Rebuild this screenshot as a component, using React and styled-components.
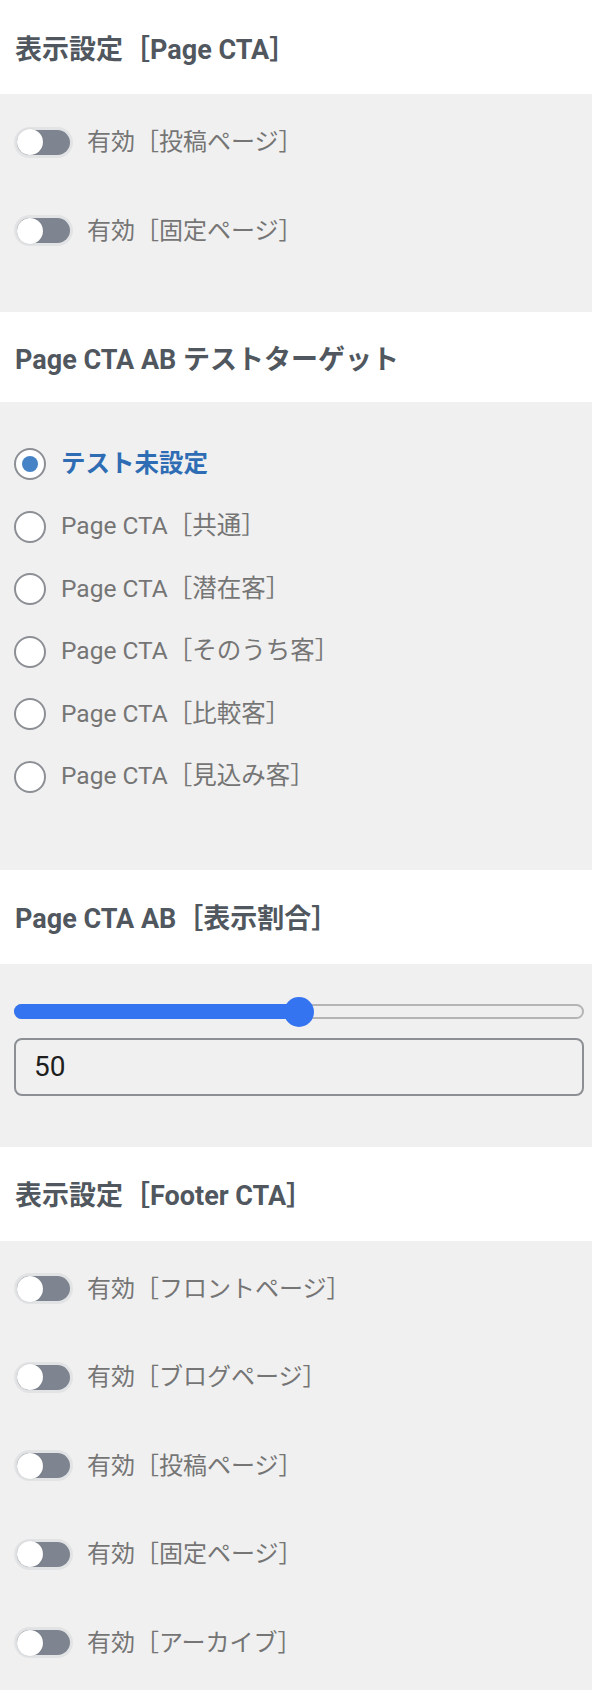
import React from 'react';
import styled, { createGlobalStyle } from 'styled-components';

const GlobalStyle = createGlobalStyle`
  html, body {
    margin: 0;
    padding: 0;
    background: #ffffff;
  }
  body {
    font-family: Roboto, "Noto Sans CJK JP", sans-serif;
    -webkit-font-smoothing: antialiased;
  }
  * {
    box-sizing: border-box;
  }
`;

const pageToggles = ['有効［投稿ページ］', '有効［固定ページ］'];

const abTargets = [
  'テスト未設定',
  'Page CTA［共通］',
  'Page CTA［潜在客］',
  'Page CTA［そのうち客］',
  'Page CTA［比較客］',
  'Page CTA［見込み客］',
];

const footerToggles = [
  '有効［フロントページ］',
  '有効［ブログページ］',
  '有効［投稿ページ］',
  '有効［固定ページ］',
  '有効［アーカイブ］',
];

const Toggle = ({ label, checked }) => (
  <ToggleRow>
    <ToggleTrack $on={checked}>
      <ToggleKnob $on={checked} />
    </ToggleTrack>
    <ToggleLabel>{label}</ToggleLabel>
  </ToggleRow>
);

const Radio = ({ label, checked }) => (
  <RadioRow>
    <RadioCircle $on={checked} />
    <RadioLabel $on={checked}>{label}</RadioLabel>
  </RadioRow>
);

const App = () => {
  const ratio = 50;

  return (
    <>
      <GlobalStyle />
      <Sidebar>
        <Header>表示設定［Page CTA］</Header>
        <Panel $bottom={19}>
          {pageToggles.map((t) => (
            <Toggle key={t} label={t} />
          ))}
        </Panel>

        <Header $height={90}>Page CTA AB テストターゲット</Header>
        <Panel>
          <RadioGroup>
            {abTargets.map((t, i) => (
              <Radio key={t} label={t} checked={i === 0} />
            ))}
          </RadioGroup>
        </Panel>

        <Header>Page CTA AB［表示割合］</Header>
        <Panel>
          <SliderWrap>
            <SliderTrack>
              <SliderFill style={{ width: `${ratio}%` }} />
              <SliderThumb style={{ left: `calc((100% - 26px) * ${ratio / 100} - 2px)` }} />
            </SliderTrack>
          </SliderWrap>
          <NumberInput type="text" defaultValue={ratio} />
        </Panel>

        <Header>表示設定［Footer CTA］</Header>
        <Panel>
          {footerToggles.map((t) => (
            <Toggle key={t} label={t} />
          ))}
        </Panel>
      </Sidebar>
    </>
  );
};

export default App;

const Sidebar = styled.div`
  width: 592px;
  display: flex;
  flex-direction: column;
`;

const Header = styled.h2`
  margin: 0;
  height: ${(p) => p.$height || 94}px;
  padding: 0 15px;
  display: flex;
  align-items: center;
  background: #ffffff;
  color: #50575e;
  font-size: 27px;
  font-weight: 700;
`;

const Panel = styled.div`
  background: #f0f0f0;
  padding: 22px 8px ${(p) => p.$bottom || 15}px 14px;
  display: flex;
  flex-direction: column;
`;

const ToggleRow = styled.div`
  height: 52px;
  margin-bottom: 36.5px;
  display: flex;
  align-items: center;
`;

const ToggleTrack = styled.span`
  flex: none;
  width: 53px;
  height: 25px;
  margin-left: 3px;
  border-radius: 13px;
  background: ${(p) => (p.$on ? '#2271b1' : '#7e8590')};
  box-shadow: 0 0 0 3px #e2e3e5;
  display: flex;
  align-items: center;
`;

const ToggleKnob = styled.span`
  width: 26px;
  height: 26px;
  border-radius: 50%;
  background: #ffffff;
  margin-left: ${(p) => (p.$on ? '27px' : '0')};
  box-shadow: 0 0 1px rgba(0, 0, 0, 0.25);
`;

const ToggleLabel = styled.span`
  margin-left: 17px;
  color: #757575;
  font-size: 24px;
  line-height: 1;
`;

const RadioGroup = styled.div`
  display: flex;
  flex-direction: column;
  gap: 30.5px;
  padding: 24px 0 26px;
  margin-bottom: 36px;
`;

const RadioRow = styled.div`
  display: flex;
  align-items: center;
  height: 32px;
`;

const RadioCircle = styled.span`
  flex: none;
  width: 32px;
  height: 32px;
  border-radius: 50%;
  border: 2px solid #8c8f94;
  background: #ffffff;
  display: flex;
  align-items: center;
  justify-content: center;

  &::after {
    content: '';
    display: ${(p) => (p.$on ? 'block' : 'none')};
    width: 16px;
    height: 16px;
    border-radius: 50%;
    background: #4682c6;
  }
`;

const RadioLabel = styled.span`
  margin-left: 15px;
  font-size: 24.5px;
  line-height: 1;
  color: ${(p) => (p.$on ? '#2e6db4' : '#757575')};
  font-weight: ${(p) => (p.$on ? 700 : 400)};
`;

const SliderWrap = styled.div`
  height: 52px;
  display: flex;
  align-items: center;
`;

const SliderTrack = styled.div`
  position: relative;
  width: 100%;
  height: 15px;
  border-radius: 8px;
  border: 2px solid #b4b4b4;
  background: #efefef;
`;

const SliderFill = styled.div`
  position: absolute;
  left: -2px;
  top: -2px;
  bottom: -2px;
  border-radius: 8px 0 0 8px;
  background: #3574f0;
`;

const SliderThumb = styled.div`
  position: absolute;
  top: 50%;
  width: 30px;
  height: 30px;
  margin-top: -15px;
  border-radius: 50%;
  background: #3574f0;
`;

const NumberInput = styled.input`
  width: 100%;
  height: 58px;
  margin: 0 0 36px;
  padding: 0 18px;
  border: 2px solid #8c8f94;
  border-radius: 8px;
  background: transparent;
  color: #1e1e1e;
  font-family: Roboto, "Noto Sans CJK JP", sans-serif;
  font-size: 28px;
  outline: none;
`;
